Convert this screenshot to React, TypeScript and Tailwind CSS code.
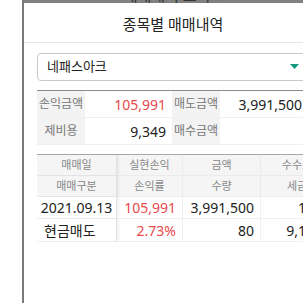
const FONT = { fontFamily: '"Noto Sans", "Noto Sans CJK KR", sans-serif' };

const infoRows = [
  { l1: "손익금액", v1: "105,991", red: true, l2: "매도금액", v2: "3,991,500" },
  { l1: "제비용", v1: "9,349", red: false, l2: "매수금액", v2: "" },
];

export default function App() {
  return (
    <div className="flex w-[303px] h-[303px] overflow-hidden bg-white" style={FONT}>
      <div className="w-[22px] shrink-0 bg-white" />
      <div className="w-[2px] shrink-0 bg-[#7a7a7a]" />
      <div className="flex flex-col w-[298px] shrink-0">
        <div className="h-[3px] overflow-hidden bg-[#808080] flex justify-center items-end">
          <span className="text-[15px] leading-[18px] text-[#333] whitespace-nowrap -mb-[1px]">매매내역 조회 ▾</span>
        </div>
        <div className="bg-white flex-1">
          <div className="h-[40px] flex items-center justify-center border-b border-[#e6e6e6]">
            <span className="text-[15px] text-[#222] pt-[3px]">종목별 매매내역</span>
          </div>
          <div className="px-[13px] pt-[10px]">
            <div className="h-[28px] border border-[#c8c8c8] rounded-[4px] flex items-center justify-between pl-[9px] pr-[9px]">
              <span className="text-[13px] text-[#222]">네패스아크</span>
              <svg width="9" height="6" viewBox="0 0 9 6">
                <path d="M0 0 L9 0 L4.5 5 Z" fill="#14977f" />
              </svg>
            </div>

            <div className="mt-[9px] border-t border-[#8a8a8a]">
              {infoRows.map((r, i) => (
                <div key={i} className="flex h-[27px] border-b border-[#f0f0f0]">
                  <div className="w-[48px] bg-[#f3f3f3] flex items-center justify-center text-[12px] text-[#777]">{r.l1}</div>
                  <div className={`w-[87px] flex items-center justify-end pr-[6px] text-[14px] ${r.red ? "text-[#e84a4a]" : "text-[#222]"}`}>{r.v1}</div>
                  <div className="w-[48px] bg-[#f3f3f3] flex items-center justify-center text-[12px] text-[#777]">{r.l2}</div>
                  <div className="w-[87px] flex items-center justify-end pr-[5px] text-[14px] text-[#222]">{r.v2}</div>
                </div>
              ))}
            </div>

            <div className="mt-[9px] border-t border-[#a8a8a8] w-[300px]">
              <div className="flex h-[21px] bg-[#f5f5f5] border-b border-[#ebebeb] text-[11px] text-[#888]">
                <div className="w-[80px] flex items-center justify-center border-r border-[#e2e2e2] shadow-[2px_0_2px_rgba(0,0,0,0.06)]">매매일</div>
                <div className="w-[66px] flex items-center justify-center border-r border-[#ebebeb]">실현손익</div>
                <div className="w-[78px] flex items-center justify-center border-r border-[#ebebeb]">금액</div>
                <div className="w-[72px] flex items-center justify-center">수수료</div>
              </div>
              <div className="flex h-[21px] bg-[#f5f5f5] border-b border-[#ebebeb] text-[11px] text-[#888]">
                <div className="w-[80px] flex items-center justify-center border-r border-[#e2e2e2] shadow-[2px_0_2px_rgba(0,0,0,0.06)]">매매구분</div>
                <div className="w-[66px] flex items-center justify-center border-r border-[#ebebeb]">손익률</div>
                <div className="w-[78px] flex items-center justify-center border-r border-[#ebebeb]">수량</div>
                <div className="w-[72px] flex items-center justify-center">세금</div>
              </div>
              <div className="flex h-[22px] border-b border-[#f0f0f0] text-[14px] text-[#222]">
                <div className="w-[80px] flex items-center justify-center border-r border-[#e2e2e2] shadow-[2px_0_2px_rgba(0,0,0,0.06)]">2021.09.13</div>
                <div className="w-[66px] flex items-center justify-end pr-[6px] border-r border-[#f0f0f0] text-[#e84a4a]">105,991</div>
                <div className="w-[78px] flex items-center justify-end pr-[6px] border-r border-[#f0f0f0]">3,991,500</div>
                <div className="w-[72px] flex items-center justify-end pr-[11px]">169</div>
              </div>
              <div className="flex h-[23px] border-b border-[#f0f0f0] text-[14px] text-[#222]">
                <div className="w-[80px] flex items-center justify-start pl-[7px] border-r border-[#e2e2e2] shadow-[2px_0_2px_rgba(0,0,0,0.06)]">현금매도</div>
                <div className="w-[66px] flex items-center justify-end pr-[6px] border-r border-[#f0f0f0] text-[#e84a4a]">2.73%</div>
                <div className="w-[78px] flex items-center justify-end pr-[6px] border-r border-[#f0f0f0]">80</div>
                <div className="w-[72px] flex items-center justify-end pr-[11px]">9,180</div>
              </div>
            </div>
          </div>
        </div>
      </div>
    </div>
  );
}
